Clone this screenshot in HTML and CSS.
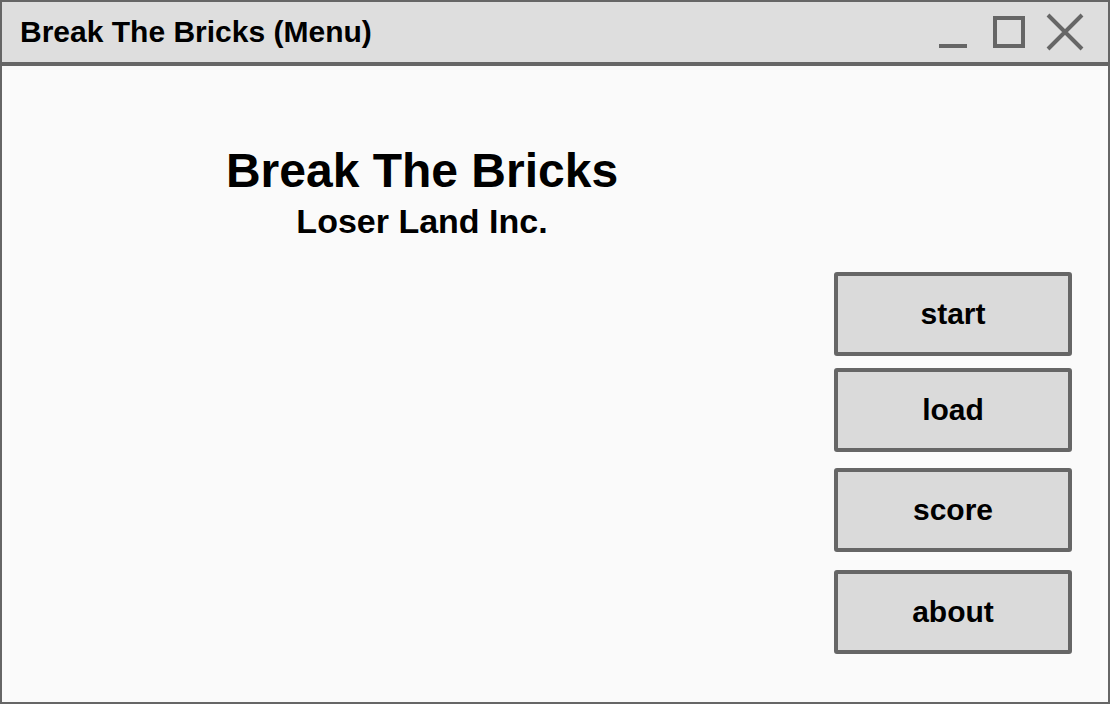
FILE: index.html
```html
<!DOCTYPE html>
<html lang="en">
<head>
<meta charset="utf-8">
<title>Break The Bricks (Menu)</title>
<link rel="stylesheet" href="styles.css">
</head>
<body>
<div class="window">
  <header class="titlebar">
    <span class="titlebar-text">Break The Bricks (Menu)</span>
    <svg class="controls" width="150" height="60" viewBox="0 0 150 60" aria-hidden="true">
      <rect x="1" y="42" width="28" height="4" fill="#666"/>
      <rect x="57" y="16" width="28" height="28" fill="none" stroke="#666" stroke-width="4"/>
      <path d="M110 13 L144 47 M144 13 L110 47" stroke="#666" stroke-width="4" fill="none"/>
    </svg>
  </header>
  <main class="content">
    <section class="intro">
      <h1 class="game-title">Break The Bricks</h1>
      <p class="company">Loser Land Inc.</p>
    </section>
    <nav class="menu">
      <button class="menu-btn btn-start">start</button>
      <button class="menu-btn btn-load">load</button>
      <button class="menu-btn btn-score">score</button>
      <button class="menu-btn btn-about">about</button>
    </nav>
  </main>
</div>
</body>
</html>
```

FILE: styles.css
```css
* { box-sizing: border-box; }

html, body {
  margin: 0;
  padding: 0;
  background: #fafafa;
}

body {
  font-family: "Liberation Sans", Arial, sans-serif;
  color: #000;
}

.window {
  width: 1110px;
  height: 704px;
  border: 2px solid #666;
  background: #fafafa;
  display: flex;
  flex-direction: column;
}

.titlebar {
  height: 64px;
  flex: none;
  background: #dedede;
  border-bottom: 4px solid #666;
  display: flex;
  align-items: center;
  justify-content: space-between;
  padding: 0 20px 0 18px;
}

.titlebar-text {
  font-size: 30px;
  font-weight: bold;
  line-height: 60px;
}

.controls {
  display: block;
  flex: none;
}

.content {
  flex: 1;
  display: grid;
  grid-template-columns: 832px 238px;
  align-items: start;
}

.intro {
  padding: 78px 0 0 8px;
  text-align: center;
}

.game-title {
  margin: 0;
  font-size: 48px;
  line-height: 54px;
  font-weight: bold;
}

.company {
  margin: 4px 0 0;
  font-size: 34px;
  line-height: 38px;
  font-weight: bold;
}

.menu {
  display: flex;
  flex-direction: column;
  padding-top: 206px;
}

.menu-btn {
  width: 238px;
  height: 84px;
  margin: 0;
  padding: 0;
  background: #dadada;
  border: 4px solid #666;
  border-radius: 3px;
  font-family: "Liberation Sans", Arial, sans-serif;
  font-size: 30px;
  font-weight: bold;
  color: #000;
}

.btn-load { margin-top: 12px; }
.btn-score { margin-top: 16px; }
.btn-about { margin-top: 18px; }
```
